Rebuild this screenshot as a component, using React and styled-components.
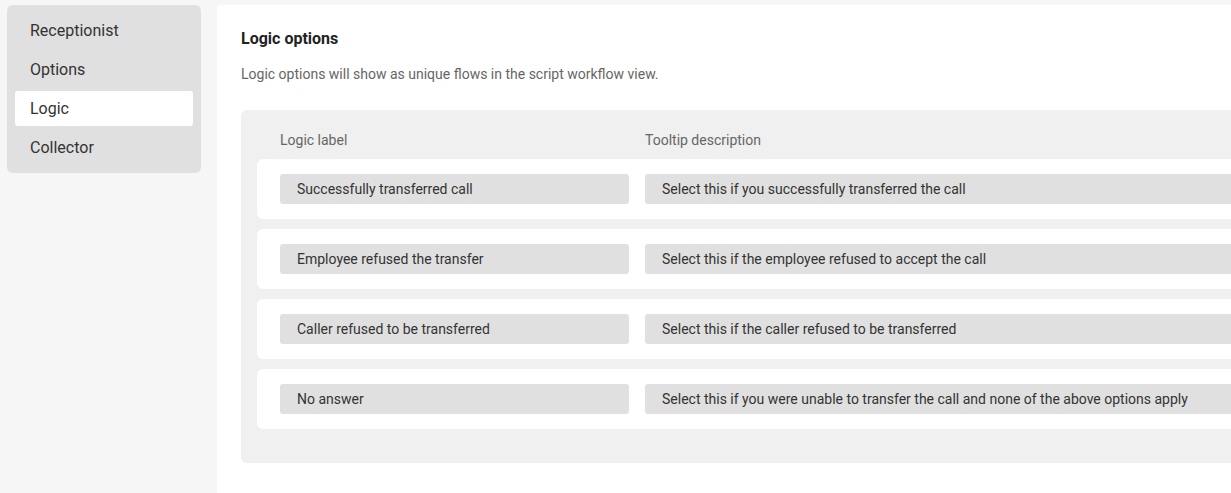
import styled, { createGlobalStyle } from "styled-components";

const GlobalStyle = createGlobalStyle`
  html, body {
    margin: 0;
    padding: 0;
    background: #f6f6f6;
    font-family: Roboto, "Noto Sans", Arial, sans-serif;
    color: #333;
    overflow: hidden;
  }
  * {
    box-sizing: border-box;
  }
`;

const menuItems = ["Receptionist", "Options", "Logic", "Collector"];

const logicRows = [
  {
    label: "Successfully transferred call",
    tooltip: "Select this if you successfully transferred the call",
  },
  {
    label: "Employee refused the transfer",
    tooltip: "Select this if the employee refused to accept the call",
  },
  {
    label: "Caller refused to be transferred",
    tooltip: "Select this if the caller refused to be transferred",
  },
  {
    label: "No answer",
    tooltip:
      "Select this if you were unable to transfer the call and none of the above options apply",
  },
];

const App = () => {
  return (
    <>
      <GlobalStyle />
      <Page>
        <Sidebar>
          {menuItems.map((item) => (
            <MenuItem key={item} $active={item === "Logic"}>
              {item}
            </MenuItem>
          ))}
        </Sidebar>
        <Main>
          <Title>Logic options</Title>
          <Subtitle>
            Logic options will show as unique flows in the script workflow view.
          </Subtitle>
          <OptionsBox>
            <HeaderRow>
              <span>Logic label</span>
              <span>Tooltip description</span>
            </HeaderRow>
            {logicRows.map((row) => (
              <RowCard key={row.label}>
                <Field>{row.label}</Field>
                <Field>{row.tooltip}</Field>
              </RowCard>
            ))}
          </OptionsBox>
        </Main>
      </Page>
    </>
  );
};

const Page = styled.div`
  display: flex;
  align-items: flex-start;
  gap: 16px;
  padding: 5px 0 0 7px;
  width: 100vw;
  height: 100vh;
  overflow: hidden;
`;

const Sidebar = styled.nav`
  width: 194px;
  flex-shrink: 0;
  background: #e0e0e0;
  border-radius: 6px;
  padding: 8px;
  display: flex;
  flex-direction: column;
  gap: 4px;
`;

const MenuItem = styled.div`
  height: 35px;
  display: flex;
  align-items: center;
  padding-left: 15px;
  font-size: 16px;
  color: #333;
  border-radius: 3px;
  background: ${({ $active }) => ($active ? "#fff" : "transparent")};
  cursor: pointer;
`;

const Main = styled.main`
  flex: 1;
  min-width: 0;
  align-self: stretch;
  background: #fff;
  border-radius: 4px 0 0 0;
  padding: 24px 0 0 24px;
  overflow: hidden;
`;

const Title = styled.h2`
  margin: 0;
  font-size: 16px;
  font-weight: 700;
  line-height: 19px;
  color: #222;
`;

const Subtitle = styled.p`
  margin: 16px 0 0;
  font-size: 14px;
  line-height: 20px;
  color: #666;
`;

const OptionsBox = styled.section`
  margin-top: 26px;
  width: 1260px;
  background: #f0f0f0;
  border-radius: 6px;
  padding: 20px 0 34px 16px;
  display: flex;
  flex-direction: column;
  gap: 10px;
`;

const HeaderRow = styled.div`
  display: grid;
  grid-template-columns: 349px 1fr;
  column-gap: 16px;
  padding-left: 23px;
  font-size: 14px;
  line-height: 20px;
  color: #666;
  margin-bottom: -1px;
`;

const RowCard = styled.div`
  display: grid;
  grid-template-columns: 349px 1fr;
  column-gap: 16px;
  align-items: center;
  height: 60px;
  padding: 0 23px;
  background: #fff;
  border-radius: 6px;
`;

const Field = styled.div`
  height: 30px;
  display: flex;
  align-items: center;
  padding-left: 17px;
  background: #e0e0e0;
  border-radius: 3px;
  font-size: 14px;
  color: #333;
  white-space: nowrap;
  overflow: hidden;
`;

export default App;
